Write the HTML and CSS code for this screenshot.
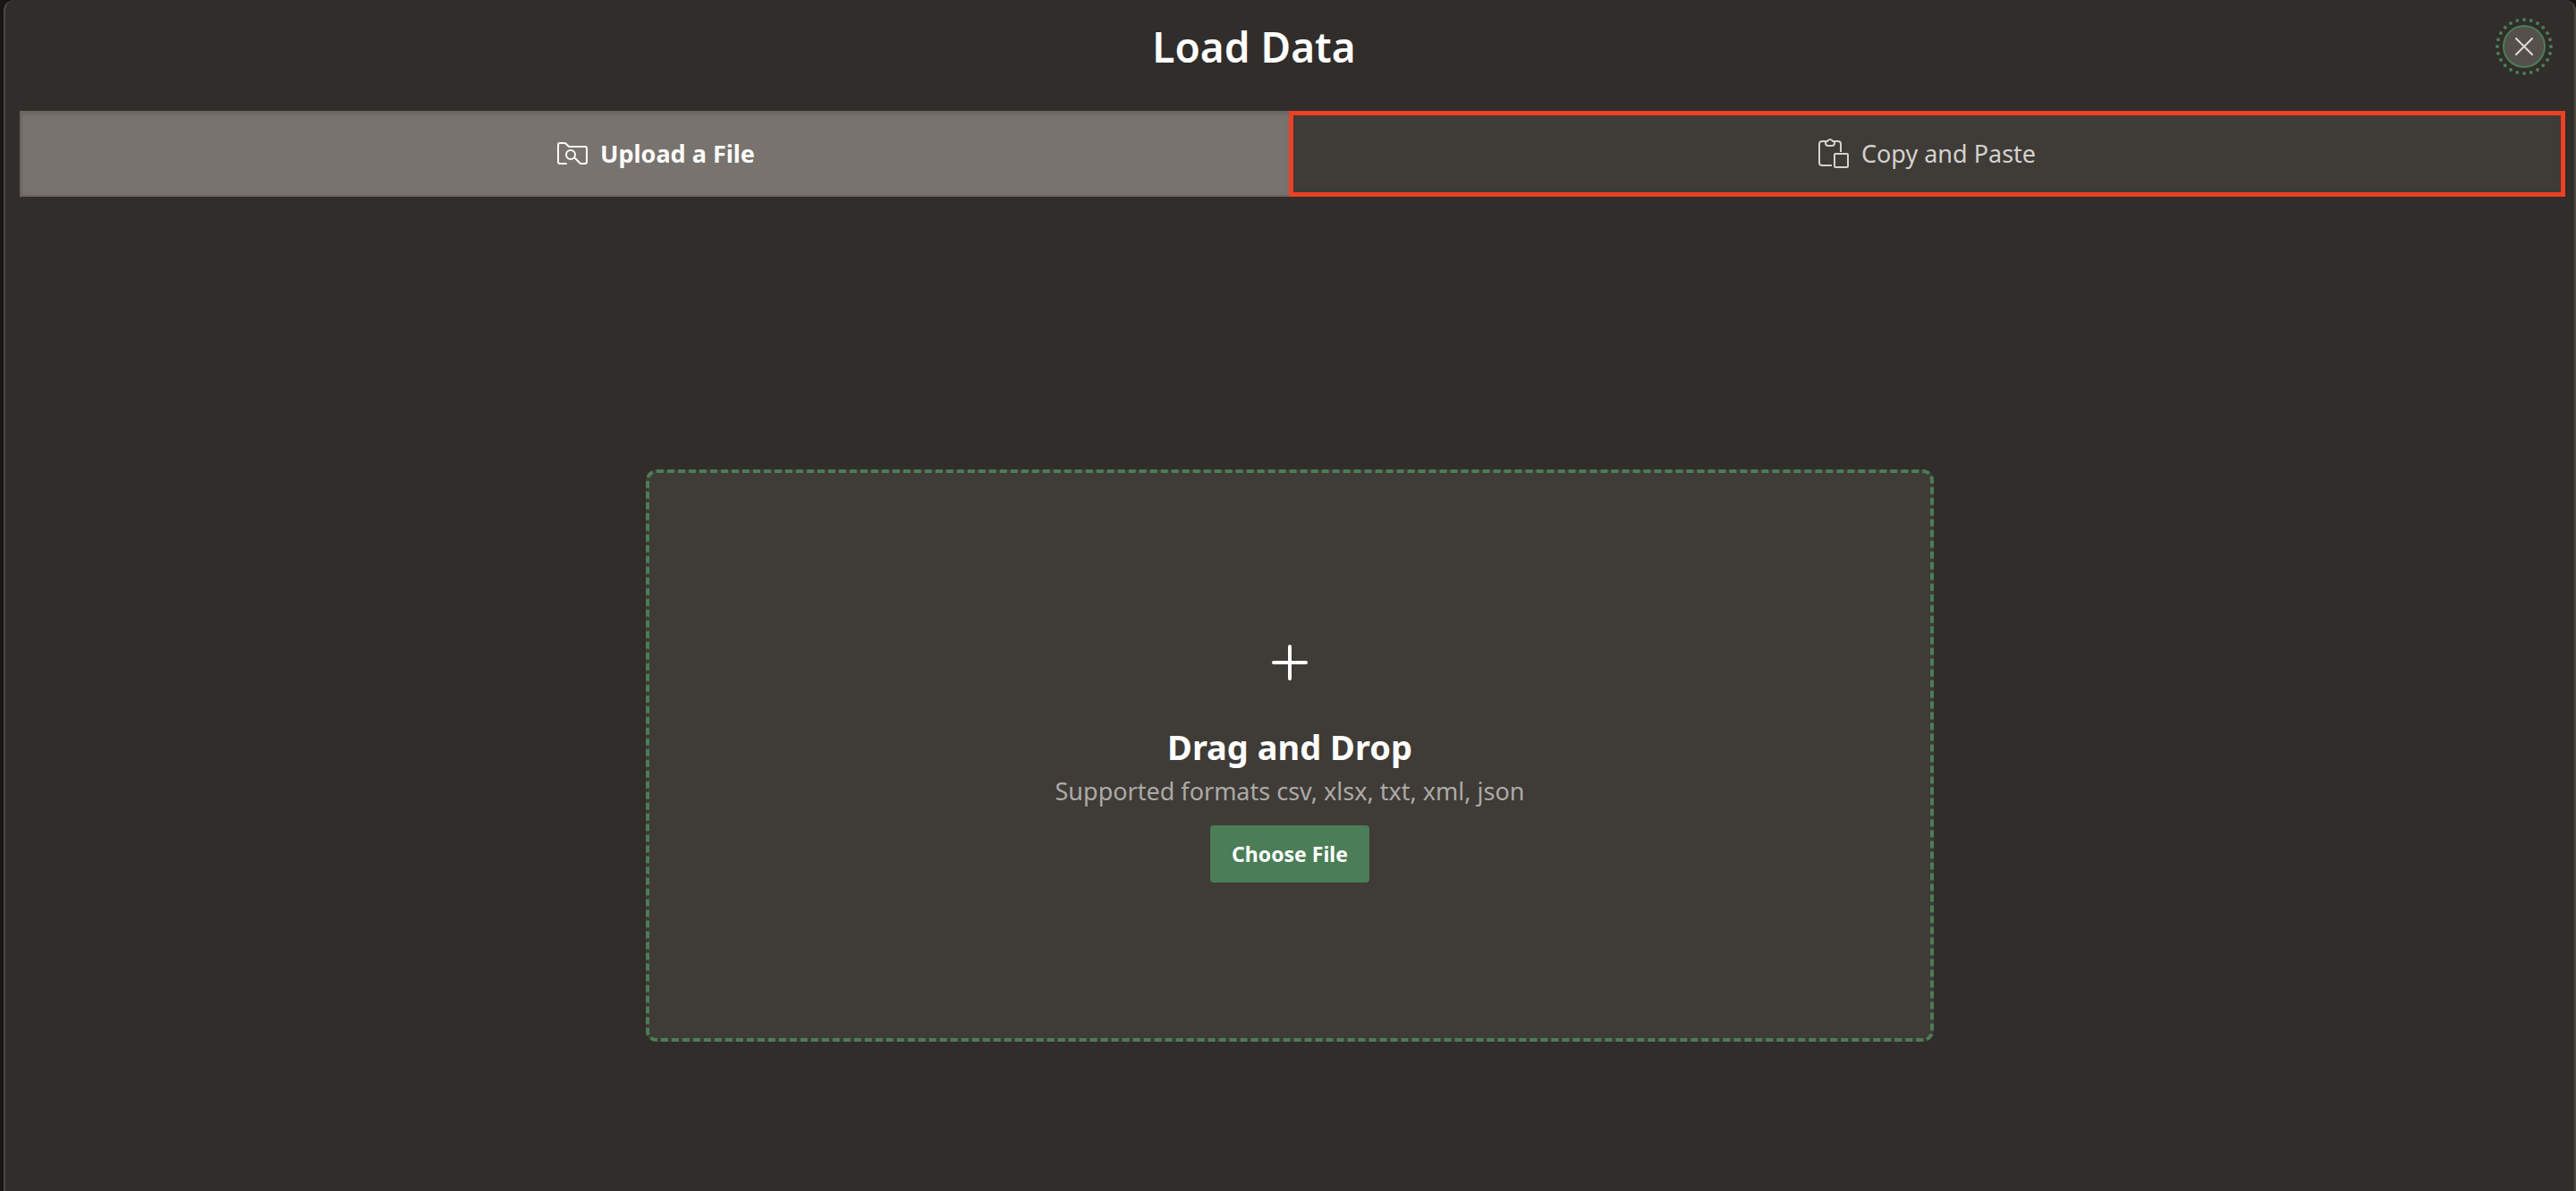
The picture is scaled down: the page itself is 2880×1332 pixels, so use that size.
FILE: index.html
```html
<!DOCTYPE html>
<html lang="en">
<head>
<meta charset="utf-8">
<title>Load Data</title>
<link rel="stylesheet" href="styles.css">
</head>
<body>
<main class="panel">
  <header class="panel-header">
    <h1 class="panel-title">Load Data</h1>
    <button class="close" type="button" aria-label="Close">
      <svg width="64" height="64" viewBox="0 0 64 64" fill="none" aria-hidden="true">
        <circle cx="32" cy="32" r="30" pathLength="240" stroke="#4b7d57" stroke-width="4" stroke-linecap="round" stroke-dasharray="0 10"/>
        <circle cx="32" cy="32" r="23" fill="#55504b" stroke="#4b7d57" stroke-width="2"/>
        <path d="M23 23l18 18M41 23L23 41" stroke="#dedcda" stroke-width="2" stroke-linecap="round"/>
      </svg>
    </button>
  </header>
  <div class="tabs" role="tablist">
    <button class="tab tab-selected" type="button" role="tab" aria-selected="true">
      <svg width="34" height="26" viewBox="0 0 34 26" fill="none" stroke="currentColor" stroke-width="2" stroke-linejoin="round" stroke-linecap="round" aria-hidden="true">
        <path d="M10 24H3q-2 0-2-2V3q0-2 2-2h5q1 0 2 1l3 3h18q2 0 2 2v15q0 2-2 2h-5l-6-6"/>
        <circle cx="15" cy="14" r="5"/>
      </svg>
      <span>Upload a File</span>
    </button>
    <button class="tab tab-marked" type="button" role="tab" aria-selected="false">
      <svg width="34" height="34" viewBox="0 0 34 34" fill="none" stroke="currentColor" stroke-width="2" stroke-linejoin="round" stroke-linecap="butt" aria-hidden="true">
        <path d="M15 30H4q-3 0-3-3V6q0-3 3-3h4M18 3h4q3 0 3 3v9"/>
        <path d="M8 3h2q1-2 3-2t3 2h2v2q0 3-3 3h-4q-3 0-3-3z"/>
        <rect x="18" y="17" width="15" height="15" rx="1"/>
      </svg>
      <span>Copy and Paste</span>
    </button>
  </div>
  <section class="dropzone" aria-labelledby="drop-title">
    <svg class="plus" width="44" height="44" viewBox="0 0 44 44" stroke="#fff" stroke-width="4" stroke-linecap="round" aria-hidden="true">
      <path d="M22 4v36M4 22h36"/>
    </svg>
    <h2 class="drop-title" id="drop-title">Drag and Drop</h2>
    <p class="formats">Supported formats csv, xlsx, txt, xml, json</p>
    <button class="choose" type="button">Choose File</button>
  </section>
</main>
</body>
</html>
```

FILE: styles.css
```css
* {
  box-sizing: border-box;
}

body {
  margin: 0;
  padding-left: 4px;
  background: #181614;
  color: #fff;
  font-family: "Noto Sans", "Open Sans", sans-serif;
}

button {
  margin: 0;
  border: 0;
  font: inherit;
  cursor: pointer;
}

.panel {
  min-height: 100vh;
  background: #312d2a;
  border: solid #4b4742;
  border-width: 0 2px;
  border-radius: 12px 12px 0 0;
}

.panel-header {
  display: flex;
  align-items: center;
  height: 124px;
  padding: 0 24px 20px 8px;
}

.panel-title {
  flex: 1;
  margin: 0;
  font-size: 46px;
  line-height: 68px;
  font-weight: 600;
  text-align: center;
}

.close {
  width: 64px;
  height: 64px;
  padding: 0;
  background: none;
}

.close svg {
  display: block;
}

.tabs {
  display: grid;
  grid-template-columns: 1fr 1fr;
  margin: 0 10px 0 16px;
}

.tab {
  display: flex;
  align-items: center;
  justify-content: center;
  gap: 14px;
  height: 96px;
  font-size: 27px;
  line-height: 40px;
}

.tab-selected {
  background: #78736e;
  border: 2px solid #6a6560;
  box-shadow: inset 0 2px 4px #6a6560;
  color: #fcfbfa;
  font-weight: 700;
}

.tab-marked {
  margin-left: -4px;
  background: #3f3b36;
  border: 5px solid #ed4024;
  color: #d4d2cf;
}

.dropzone {
  display: flex;
  flex-direction: column;
  align-items: center;
  width: 50vw;
  min-height: 640px;
  margin: 305px auto 0;
  padding-top: 190px;
  background: #3f3b36;
  border: 4px dashed #4b7d57;
  border-radius: 12px;
}

.drop-title {
  margin: 42px 0 0;
  font-size: 38px;
  line-height: 60px;
  font-weight: 700;
}

.formats {
  margin: 2px 0 20px;
  color: #acaaa7;
  font-size: 27px;
  line-height: 36px;
}

.choose {
  padding: 14px 24px;
  background: #4b7d57;
  border-radius: 4px;
  color: #fff;
  font-size: 23px;
  line-height: 36px;
  font-weight: 700;
}
```
